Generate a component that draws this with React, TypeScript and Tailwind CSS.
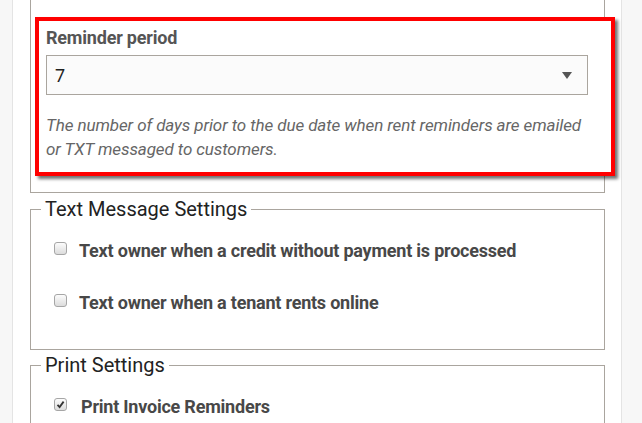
import React from 'react';

const font = { fontFamily: 'Roboto, "Liberation Sans", sans-serif' };

const Checkbox = ({ checked = false }: { checked?: boolean }) => (
  <span className="mt-[3px] flex h-[13px] w-[13px] shrink-0 items-center justify-center rounded-[3px] border border-[#a6a6a6] bg-gradient-to-b from-[#fcfcfc] to-[#dcdcdc]">
    {checked && (
      <svg width="9" height="9" viewBox="0 0 9 9">
        <path d="M1.5 4.8 L3.6 7 L7.6 1.6" fill="none" stroke="#333" strokeWidth="1.8" />
      </svg>
    )}
  </span>
);

const CheckRow = ({ label, checked, gap }: { label: string; checked?: boolean; gap: string }) => (
  <label className={`flex items-start ${gap}`}>
    <Checkbox checked={checked} />
    <span className="text-[18px] font-bold leading-[24px] tracking-[-0.22px] text-[#484848]">{label}</span>
  </label>
);

export default function App() {
  return (
    <div style={font} className="h-[423px] overflow-hidden bg-[#f7f7f7] pl-[12px] pr-[20px]">
      <div className="h-full border-x border-[#e4e4e4] bg-white pl-[17px] pr-[16px]">
        {/* Reminder fieldset (top cut off) */}
        <div className="border-x border-b border-[#aaa59e] pb-[16px] pt-[17px]">
          <div className="ml-[4px] w-[580px] border-4 border-[#ff0000] bg-white pb-[11px] pl-[7px] pr-[20px] pt-[5px] shadow-[3px_3px_3px_rgba(0,0,0,0.55)]">
            <div className="text-[18px] font-bold leading-[24px] tracking-[-0.2px] text-[#555]">Reminder period</div>
            <div className="mt-[5px] flex h-[40px] w-[542px] items-center justify-between border border-[#aaa59e] bg-[#fbfbfb] pl-[8px] pr-[15px]">
              <span className="text-[18px] text-[#222]">7</span>
              <svg width="10" height="7" viewBox="0 0 10 7">
                <path d="M0 0 H10 L5 7 Z" fill="#555" />
              </svg>
            </div>
            <p className="mt-[18px] text-[17px] italic leading-[24px] tracking-[-0.1px] text-[#666]">
              The number of days prior to the due date when rent reminders are emailed or TXT messaged to customers.
            </p>
          </div>
        </div>

        {/* Text Message Settings */}
        <fieldset className="mt-[4px] border border-[#aaa59e] pb-[34px] pl-[23px] pt-[18px]">
          <legend className="-ml-[13px] px-[4px] text-[20px] leading-[24px] text-[#222]">Text Message Settings</legend>
          <div className="flex flex-col gap-[28px]">
            <CheckRow gap="gap-[12px]" label="Text owner when a credit without payment is processed" />
            <CheckRow gap="gap-[12px]" label="Text owner when a tenant rents online" />
          </div>
        </fieldset>

        {/* Print Settings */}
        <fieldset className="mt-[3px] border border-[#aaa59e] pb-[40px] pl-[23px] pt-[18px]">
          <legend className="-ml-[13px] px-[4px] text-[20px] leading-[24px] text-[#222]">Print Settings</legend>
          <CheckRow gap="gap-[14px]" checked label="Print Invoice Reminders" />
        </fieldset>
      </div>
    </div>
  );
}
